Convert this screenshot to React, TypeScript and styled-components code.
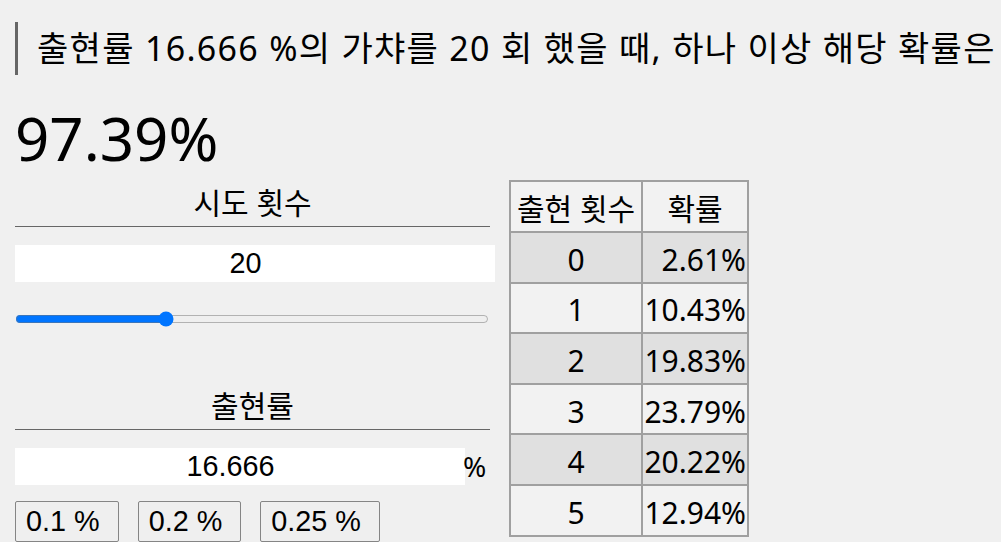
import React, { useState } from "react";
import styled, { createGlobalStyle } from "styled-components";

const GlobalStyle = createGlobalStyle`
  html, body {
    margin: 0;
    background: #f0f0f0;
  }
  body {
    font-family: "Noto Sans", "Noto Sans CJK KR", sans-serif;
    color: #000;
  }
`;

const Page = styled.div`
  padding: 22px 0 0 15px;
`;

const Question = styled.div`
  height: 53px;
  line-height: 53px;
  border-left: 3px solid #666;
  padding-left: 19px;
  font-size: 34px;
  letter-spacing: 1.3px;
  white-space: nowrap;
`;

const Result = styled.div`
  margin-top: 31px;
  font-size: 60px;
  line-height: 64px;
`;

const Main = styled.div`
  margin-top: 10px;
  display: flex;
  align-items: flex-start;
  gap: 19px;
`;

const Controls = styled.div`
  width: 475px;
  display: flex;
  flex-direction: column;
`;

const FieldLabel = styled.div<{ $gap?: number }>`
  margin-top: ${(p) => p.$gap || 0}px;
  height: 46px;
  line-height: 46px;
  border-bottom: 1px solid #666;
  text-align: center;
  font-size: 30px;
`;

const NumberInput = styled.input<{ $width: number }>`
  width: ${(p) => p.$width}px;
  height: 37px;
  box-sizing: border-box;
  border: none;
  outline: none;
  padding: 0 19px 0 0;
  background: #fff;
  text-align: center;
  font-family: "Liberation Sans", Arial, sans-serif;
  font-size: 28.8px;
  color: #000;
`;

const CountInput = styled(NumberInput)`
  margin-top: 18px;
`;

const Range = styled.input`
  width: 474px;
  height: 16px;
  margin: 29px 0 0;
`;

const RateRow = styled.div`
  margin-top: 17px;
  display: flex;
  align-items: center;
`;

const Unit = styled.span`
  margin-left: -2px;
  font-size: 28px;
`;

const Presets = styled.div`
  margin-top: 16px;
  display: flex;
  gap: 19px;
`;

const Preset = styled.button`
  height: 41px;
  padding: 1px 18px 1px 10px;
  border: 1px solid #858585;
  border-radius: 2px;
  background: #efefef;
  font-family: "Liberation Sans", Arial, sans-serif;
  font-size: 28.8px;
  color: #000;
`;

const Table = styled.table`
  border-collapse: collapse;
  border: 2px solid #a0a0a0;
  font-size: 30px;
`;

const Row = styled.tr<{ $shade?: boolean }>`
  background: ${(p) => (p.$shade ? "#e0e0e0" : "#f2f2f2")};
`;

const Head = styled.th<{ $width: number }>`
  border: 2px solid #a0a0a0;
  width: ${(p) => p.$width}px;
  height: 49px;
  padding: 0 1px;
  font-weight: normal;
  white-space: nowrap;
`;

const Cell = styled.td<{ $right?: boolean }>`
  border: 2px solid #a0a0a0;
  height: 44.6px;
  padding: 4px 1px 0;
  text-align: ${(p) => (p.$right ? "right" : "center")};
`;

function binom(n: number, k: number, p: number) {
  let c = 1;
  for (let i = 0; i < k; i++) c = (c * (n - i)) / (i + 1);
  return c * Math.pow(p, k) * Math.pow(1 - p, n - k);
}

export default function App() {
  const [count, setCount] = useState(20);
  const [rate, setRate] = useState("16.666");
  const p = parseFloat(rate) / 100 || 0;
  const atLeastOne = (1 - Math.pow(1 - p, count)) * 100;
  const rows = [0, 1, 2, 3, 4, 5];

  return (
    <Page>
      <GlobalStyle />
      <Question>
        출현률 {rate} %의 가챠를 {count} 회 했을 때, 하나 이상 해당 확률은
      </Question>
      <Result>{atLeastOne.toFixed(2)}%</Result>
      <Main>
        <Controls>
          <FieldLabel>시도 횟수</FieldLabel>
          <CountInput
            $width={480}
            value={count}
            onChange={(e) => setCount(Number(e.target.value) || 0)}
          />
          <Range
            type="range"
            min={0}
            max={64}
            value={count}
            onChange={(e) => setCount(Number(e.target.value))}
          />
          <FieldLabel $gap={56}>출현률</FieldLabel>
          <RateRow>
            <NumberInput
              $width={450}
              value={rate}
              onChange={(e) => setRate(e.target.value)}
            />
            <Unit>%</Unit>
          </RateRow>
          <Presets>
            <Preset onClick={() => setRate("0.1")}>0.1 %</Preset>
            <Preset onClick={() => setRate("0.2")}>0.2 %</Preset>
            <Preset onClick={() => setRate("0.25")}>0.25 %</Preset>
          </Presets>
        </Controls>
        <Table>
          <thead>
            <Row>
              <Head $width={128}>출현 횟수</Head>
              <Head $width={102}>확률</Head>
            </Row>
          </thead>
          <tbody>
            {rows.map((k) => (
              <Row key={k} $shade={k % 2 === 0}>
                <Cell>{k}</Cell>
                <Cell $right>{(binom(count, k, p) * 100).toFixed(2)}%</Cell>
              </Row>
            ))}
          </tbody>
        </Table>
      </Main>
    </Page>
  );
}
